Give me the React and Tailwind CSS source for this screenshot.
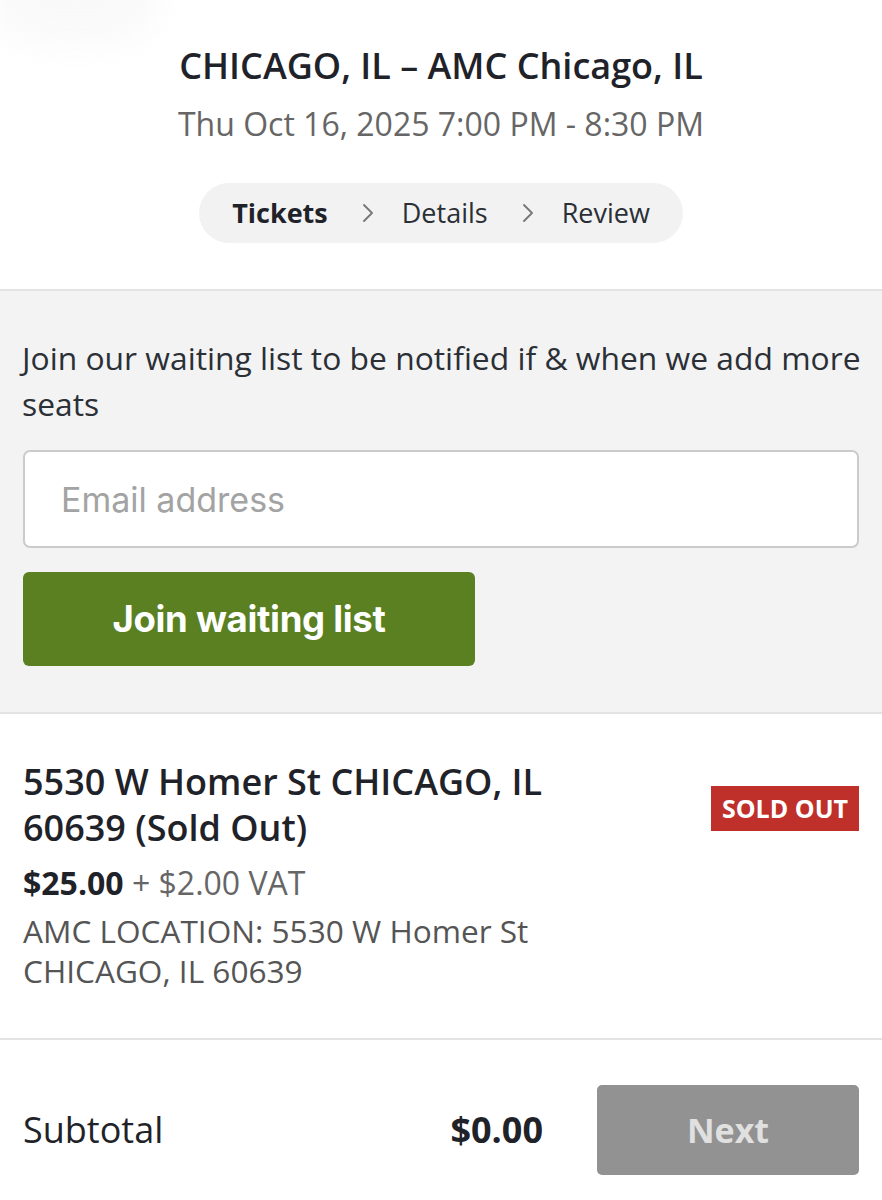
import { ChevronRight } from 'lucide-react';

const App = () => {
    return (
        <div className="relative w-[882px] h-[1200px] overflow-hidden bg-white text-[#1f2329] font-['Open_Sans',sans-serif]">
            {/* faint logo shadow */}
            <div className="absolute -left-[10px] -top-[60px] w-[170px] h-[105px] rounded-full bg-[#f6f6f6] blur-lg opacity-60"></div>

            {/* Header */}
            <div className="relative flex flex-col items-center pt-[44px]">
                <h1 className="text-[36px] leading-[44px] font-semibold text-[#1f2329]">
                    CHICAGO, IL – AMC Chicago, IL
                </h1>
                <p className="mt-[16px] text-[32px] leading-[40px] text-[#666]">
                    Thu Oct 16, 2025 7:00 PM - 8:30 PM
                </p>

                <div className="mt-[39px] flex items-center h-[60px] px-[33px] rounded-full bg-[#f2f2f2] text-[27px]">
                    <span className="font-bold text-[#1f2329]">Tickets</span>
                    <ChevronRight className="ml-[24px] mr-[18px] w-[32px] h-[32px] text-[#777]" strokeWidth={1.4} />
                    <span className="text-[#2b2f36]">Details</span>
                    <ChevronRight className="ml-[24px] mr-[18px] w-[32px] h-[32px] text-[#777]" strokeWidth={1.4} />
                    <span className="text-[#2b2f36]">Review</span>
                </div>
            </div>

            {/* Waiting list */}
            <div className="mt-[46px] border-y-2 border-[#e3e3e3] bg-[#f3f3f3] px-[23px] pt-[44px] pb-[46px]">
                <p className="-ml-[1px] -mr-[10px] text-[31.8px] leading-[46px] text-[#2b2f36]">
                    Join our waiting list to be notified if &amp; when we add more seats
                </p>
                <input
                    type="text"
                    placeholder="Email address"
                    className="mt-[23px] block w-full h-[98px] rounded-[7px] border-2 border-[#cbcbcb] bg-white px-[36px] text-[34px] font-['Inter',sans-serif] placeholder:text-[#a3a3a3] outline-none"
                />
                <button className="mt-[24px] w-[452px] h-[94px] rounded-[6px] bg-[#5a8022] text-white text-[36.5px] font-bold font-['Inter',sans-serif] tracking-[-0.3px]">
                    Join waiting list
                </button>
            </div>

            {/* Ticket */}
            <div className="flex justify-between px-[23px] pt-[45px] pb-[47px] border-b-2 border-[#e3e3e3]">
                <div className="w-[560px]">
                    <p className="text-[36px] leading-[46px] font-semibold text-[#1f2329]">
                        5530 W Homer St CHICAGO, IL 60639 (Sold Out)
                    </p>
                    <p className="mt-[12px] text-[32px] leading-[40px]">
                        <span className="font-bold text-[#1f2329]">$25.00</span>
                        <span className="text-[#666]"> + $2.00 VAT</span>
                    </p>
                    <p className="mt-[8px] text-[31.6px] leading-[40px] text-[#555]">
                        AMC LOCATION: 5530 W Homer St CHICAGO, IL 60639
                    </p>
                </div>
                <div className="mt-[27px] self-start h-[45px] px-[11px] flex items-center bg-[#c0302a] text-white text-[25px] font-bold">
                    SOLD OUT
                </div>
            </div>

            {/* Footer */}
            <div className="flex items-center px-[23px] pt-[45px]">
                <span className="text-[36px] text-[#1f2329]">Subtotal</span>
                <span className="ml-auto text-[36px] font-bold text-[#1f2329]">$0.00</span>
                <button className="ml-[54px] w-[262px] h-[90px] rounded-[5px] bg-[#929292] text-[#e0e0e0] text-[34px] font-bold">
                    Next
                </button>
            </div>
        </div>
    );
};

export default App;
